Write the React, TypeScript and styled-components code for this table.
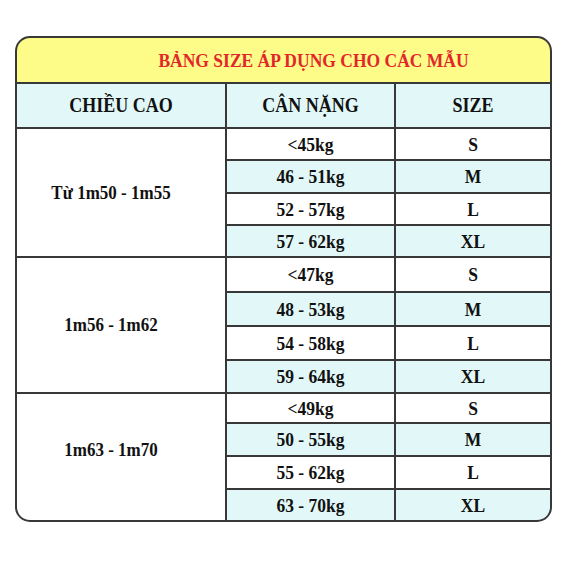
import styled, { createGlobalStyle } from "styled-components";

const GlobalStyle = createGlobalStyle`
	html, body {
		margin: 0;
		padding: 0;
		background: #ffffff;
	}
	body {
		font-family: "Liberation Serif", "Times New Roman", serif;
		color: #111111;
	}
`;

const Page = styled.div`
	width: 569px;
	height: 569px;
	padding: 36px 0 0 15px;
	box-sizing: border-box;
`;

const Frame = styled.div`
	width: 533px;
	border: 2px solid #383838;
	border-radius: 15px;
	overflow: hidden;
	background: #383838;
`;

const Grid = styled.div`
	display: grid;
	grid-template-columns: 208px 167px 154px;
	grid-template-rows: 44px 43px 30px 31px 30px 30px 33px 32px 32px 31px 28px 31px 31px 30px;
	gap: 2px;
`;

const Title = styled.div`
	grid-column: span 3;
	background: #fdfc88;
	color: #e3262b;
	font-weight: 700;
	font-size: 17.5px;
	display: flex;
	align-items: center;
	justify-content: center;
	padding-left: 60px;
`;

const Cell = styled.div<{ $tint?: boolean }>`
	background: ${(p) => (p.$tint ? "#e2f8f8" : "#ffffff")};
	display: flex;
	align-items: center;
	justify-content: center;
	font-weight: 700;
	font-size: 17.5px;
`;

const HeadCell = styled(Cell)`
	font-size: 18px;
`;

const HeightCell = styled(Cell)<{ $lift?: number }>`
	grid-row: span 4;
	padding-right: 20px;
	padding-bottom: ${(p) => p.$lift ?? 0}px;
	font-size: 17px;
`;

const Tall = styled.span`
	display: inline-block;
	transform: scaleY(1.12);
	white-space: nowrap;
`;

const groups = [
	{
		height: "Từ 1m50 - 1m55",
		lift: 0,
		rows: [
			["<45kg", "S"],
			["46 - 51kg", "M"],
			["52 - 57kg", "L"],
			["57 - 62kg", "XL"],
		],
	},
	{
		height: "1m56 - 1m62",
		lift: 0,
		rows: [
			["<47kg", "S"],
			["48 - 53kg", "M"],
			["54 - 58kg", "L"],
			["59 - 64kg", "XL"],
		],
	},
	{
		height: "1m63 - 1m70",
		lift: 14,
		rows: [
			["<49kg", "S"],
			["50 - 55kg", "M"],
			["55 - 62kg", "L"],
			["63 - 70kg", "XL"],
		],
	},
];

export default function App() {
	return (
		<>
			<GlobalStyle />
			<Page>
				<Frame>
					<Grid>
						<Title>
							<Tall>BẢNG SIZE ÁP DỤNG CHO CÁC MẪU</Tall>
						</Title>
						<HeadCell $tint>
							<Tall>CHIỀU CAO</Tall>
						</HeadCell>
						<HeadCell $tint>
							<Tall>CÂN NẶNG</Tall>
						</HeadCell>
						<HeadCell $tint>
							<Tall>SIZE</Tall>
						</HeadCell>
						{groups.map((g) => [
							<HeightCell key={g.height} $lift={g.lift}>
								<Tall>{g.height}</Tall>
							</HeightCell>,
							...g.rows.flatMap(([weight, size], i) => [
								<Cell key={g.height + weight} $tint={i % 2 === 1}>
									<Tall>{weight}</Tall>
								</Cell>,
								<Cell key={g.height + size} $tint={i % 2 === 1}>
									<Tall>{size}</Tall>
								</Cell>,
							]),
						])}
					</Grid>
				</Frame>
			</Page>
		</>
	);
}
